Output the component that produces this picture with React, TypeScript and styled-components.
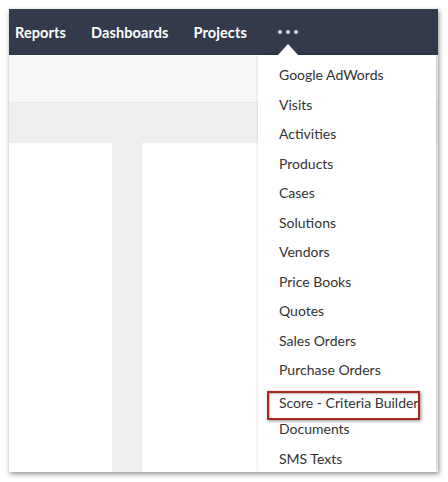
import React from "react";
import styled, { createGlobalStyle } from "styled-components";

const Global = createGlobalStyle`
  html, body { margin: 0; padding: 0; background: #ffffff; }
  body { font-family: "Lato", "Liberation Sans", Arial, sans-serif; }
`;

const Page = styled.div`
  padding: 9px 10px 10px 9px;
  width: 448px;
  height: 482px;
  box-sizing: border-box;
`;

const Frame = styled.div`
  position: relative;
  width: 429px;
  height: 463px;
  overflow: hidden;
  display: flex;
  flex-direction: column;
  background: #efefef;
  box-shadow: 1px 2px 5px rgba(0, 0, 0, 0.45);
`;

const Nav = styled.nav`
  height: 46px;
  flex: none;
  background: #323a4c;
  display: flex;
  align-items: center;
  padding-left: 6px;
  gap: 25px;
`;

const NavLink = styled.span`
  color: #ffffff;
  font-size: 14.5px;
  font-weight: 700;
  letter-spacing: 0.1px;
`;

const MoreWrap = styled.div`
  position: relative;
  margin-left: 6px;
  width: 20px;
  height: 46px;
  display: flex;
  align-items: center;
  justify-content: center;
  gap: 4px;
`;

const Dot = styled.span`
  width: 4px;
  height: 4px;
  border-radius: 50%;
  background: #d4d7de;
`;

const Caret = styled.span`
  position: absolute;
  bottom: 0;
  left: 0;
  width: 0;
  height: 0;
  border-left: 10px solid transparent;
  border-right: 10px solid transparent;
  border-bottom: 11px solid #ffffff;
  z-index: 3;
`;

const SubBar = styled.div`
  height: 47px;
  flex: none;
  background: #f8f8f8;
  border-bottom: 1px solid #e9e9e9;
`;

const Content = styled.div`
  flex: 1;
  display: flex;
  gap: 30px;
  padding-top: 40px;
`;

const Panel = styled.div<{ $width?: number }>`
  background: #ffffff;
  ${(p) => (p.$width ? `width: ${p.$width}px; flex: none;` : `flex: 1;`)}
`;

const Menu = styled.ul`
  position: absolute;
  left: 249px;
  top: 46px;
  width: 178px;
  bottom: 0;
  margin: 0;
  padding: 5px 0 0 0;
  list-style: none;
  background: #ffffff;
  box-shadow: 1px 0 4px rgba(0, 0, 0, 0.25);
  z-index: 2;
`;

const Item = styled.li<{ $boxed?: boolean }>`
  position: relative;
  height: 29.5px;
  line-height: ${(p) => (p.$boxed ? "35.5px" : "29.5px")};
  padding-left: 21px;
  font-size: 14px;
  color: #333333;
  white-space: nowrap;
`;

const Highlight = styled.span`
  position: absolute;
  left: 9px;
  top: 6px;
  width: 149px;
  height: 25px;
  border: 2px solid #a8281a;
  box-shadow: 1px 1px 3px rgba(0, 0, 0, 0.45), inset 1px 1px 2px rgba(0, 0, 0, 0.3);
  pointer-events: none;
`;

const BOXED = "Score - Criteria Builder";

const items = [
  "Google AdWords",
  "Visits",
  "Activities",
  "Products",
  "Cases",
  "Solutions",
  "Vendors",
  "Price Books",
  "Quotes",
  "Sales Orders",
  "Purchase Orders",
  BOXED,
  "Documents",
  "SMS Texts",
];

export default function App() {
  return (
    <>
      <Global />
      <Page>
        <Frame>
          <Nav>
            <NavLink>Reports</NavLink>
            <NavLink>Dashboards</NavLink>
            <NavLink>Projects</NavLink>
            <MoreWrap>
              <Dot />
              <Dot />
              <Dot />
              <Caret />
            </MoreWrap>
          </Nav>
          <SubBar />
          <Content>
            <Panel $width={103} />
            <Panel />
          </Content>
          <Menu>
            {items.map((t) => (
              <Item key={t} $boxed={t === BOXED}>
                {t}
                {t === BOXED && <Highlight />}
              </Item>
            ))}
          </Menu>
        </Frame>
      </Page>
    </>
  );
}
